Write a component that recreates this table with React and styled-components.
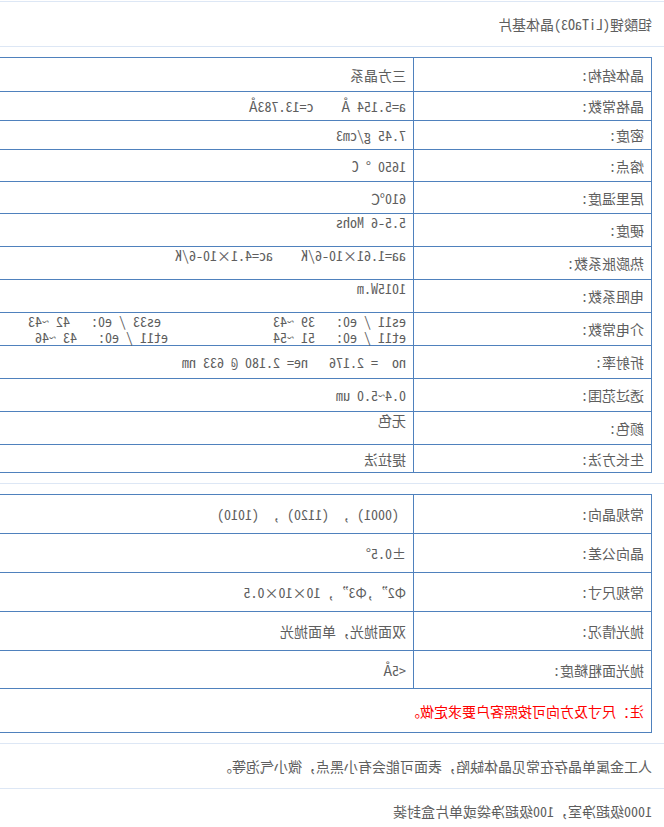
import styled, { createGlobalStyle } from "styled-components"

const GlobalStyle = createGlobalStyle`
  *, *::before, *::after {
    box-sizing: border-box;
  }
  html, body {
    margin: 0;
    padding: 0;
    background: #fff;
    overflow: hidden;
  }
`

// the reference is a mirrored capture of the page, so the whole page is flipped
const Page = styled.div`
  width: 664px;
  height: 827px;
  overflow: hidden;
  transform: scaleX(-1);
  font-family: "Noto Sans Mono CJK SC", "Noto Sans CJK SC", monospace;
  font-size: 14px;
  line-height: 16px;
  color: #5e5e5e;
`

const Band = styled.div`
  border-top: 1px solid #dde7f5;
  height: ${(p) => p.h}px;
  padding-left: 12px;
  display: flex;
  align-items: center;
  white-space: nowrap;
`

const TitleBand = styled(Band)`
  margin-top: 1px;
  border-bottom: 1px solid #dde7f5;
`

const Section = styled.div`
  border-top: ${(p) => (p.line ? "1px solid #dde7f5" : "none")};
  padding: 10px 0 10px 12px;
`

const Grid = styled.div`
  width: ${(p) => p.w}px;
  border-top: 1px solid #4f81bd;
  border-left: 1px solid #4f81bd;
`

const Row = styled.div`
  display: grid;
  grid-template-columns: 238px 1fr;
  height: ${(p) => p.h}px;
  border-bottom: 1px solid #4f81bd;
`

const Label = styled.div`
  border-right: 1px solid #4f81bd;
  padding: 0 7px;
  display: flex;
  align-items: center;
  white-space: nowrap;
`

const Value = styled.div`
  padding: 0 7px;
  display: flex;
  align-items: ${(p) => (p.top ? "flex-start" : "center")};
  white-space: pre;
`

const NoteRow = styled.div`
  height: 44px;
  padding: 0 7px;
  display: flex;
  align-items: center;
  border-bottom: 1px solid #4f81bd;
  color: #ff0000;
`

const props1 = [
  ["晶体结构:", "三方晶系", 34],
  ["晶格常数:", "a=5.154 Å    c=13.783Å", 29],
  ["密度:", "7.45 g/cm3", 29],
  ["熔点:", "1650 ° C", 32],
  ["居里温度:", "610℃", 32],
  ["硬度:", "5.5-6 Mohs", 33, true],
  ["热膨胀系数:", "aa=1.61×10-6/K    ac=4.1×10-6/K", 33, true],
  ["电阻系数:", "1015W.m", 33, true],
  [
    "介电常数:",
    "es11 / e0:   39 ~43                es33 / e0:   42 ~43\net11 / e0:   51 ~54               et11 / e0:   43 ~46",
    33,
    true,
  ],
  ["折射率:", "no  = 2.176   ne= 2.180 @ 633 nm", 33],
  ["透过范围:", "0.4~5.0 um", 33],
  ["颜色:", "无色", 33, true],
  ["生长方法:", "提拉法", 28],
]

const props2 = [
  ["常规晶向:", " (0001) ,  (1120) ,  (1010)", 39],
  ["晶向公差:", "±0.5°", 39],
  ["常规尺寸:", "Φ2”,Φ3”, 10×10×0.5", 39],
  ["抛光情况:", "双面抛光，单面抛光", 39],
  ["抛光面粗糙度:", "<5Å", 38],
]

function SpecTable({ rows, note, w }) {
  return (
    <Grid w={w}>
      {rows.map(([k, v, h, top]) => (
        <Row key={k} h={h}>
          <Label>{k}</Label>
          <Value top={top}>{v}</Value>
        </Row>
      ))}
      {note && <NoteRow>{note}</NoteRow>}
    </Grid>
  )
}

export default function App() {
  return (
    <>
      <GlobalStyle />
      <Page>
        <TitleBand h={46}>钽酸锂(LiTaO3)晶体基片</TitleBand>
        <Section>
          <SpecTable rows={props1} w={720} />
        </Section>
        <Section line>
          <SpecTable rows={props2} w={720} note="注：尺寸及方向可按照客户要求定做。" />
        </Section>
        <Band h={45}>人工金属单晶存在常见晶体缺陷，表面可能会有小黑点，微小气泡等。</Band>
        <Band h={45}>1000级超净室，100级超净袋或单片盒封装</Band>
      </Page>
    </>
  )
}
